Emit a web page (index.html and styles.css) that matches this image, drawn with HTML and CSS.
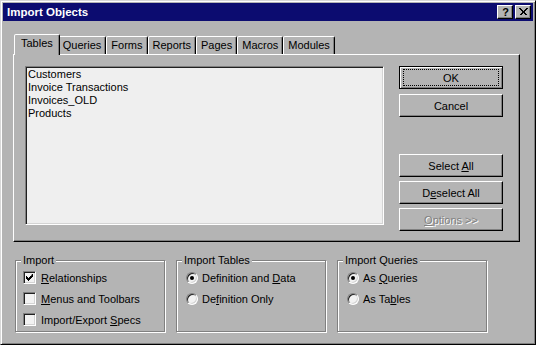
FILE: index.html
```html
<!DOCTYPE html>
<html>
<head>
<meta charset="utf-8">
<title>Import Objects</title>
<link rel="stylesheet" href="styles.css">
</head>
<body>
<div class="window">
  <div class="titlebar">
    <span class="title">Import Objects</span>
    <div class="caption-btns">
      <span class="cbtn help">?</span>
      <span class="cbtn close"><svg width="9" height="8" viewBox="0 0 9 8"><path d="M0.5 0.5 L7.5 7.5 M1.5 0.5 L8.5 7.5 M7.5 0.5 L0.5 7.5 M8.5 0.5 L1.5 7.5" stroke="#000" stroke-width="1" fill="none" shape-rendering="crispEdges"/></svg></span>
    </div>
  </div>
  <div class="content">
    <div class="tabs">
      <div class="tab active">Tables</div>
      <div class="tab">Queries</div>
      <div class="tab">Forms</div>
      <div class="tab">Reports</div>
      <div class="tab">Pages</div>
      <div class="tab">Macros</div>
      <div class="tab">Modules</div>
    </div>
    <div class="panel">
      <div class="listbox">
        <div class="item">Customers</div>
        <div class="item">Invoice Transactions</div>
        <div class="item">Invoices_OLD</div>
        <div class="item">Products</div>
      </div>
      <div class="buttons">
        <button class="btn default"><span>OK</span></button>
        <button class="btn cancel">Cancel</button>
        <button class="btn select-all">Select <u>A</u>ll</button>
        <button class="btn deselect">D<u>e</u>select All</button>
        <button class="btn options disabled"><u>O</u>ptions &gt;&gt;</button>
      </div>
    </div>
    <div class="groups">
      <fieldset class="group">
        <legend>Import</legend>
        <div class="row check-row"><span class="check checked"><svg width="7" height="7" viewBox="0 0 7 7"><path d="M6 0h1v3h-1v1h-1v1h-1v1h-1v1h-1v-1h-1v-1h-1v-3h1v1h1v1h1v-1h1v-1h1z" fill="#000"/></svg></span><span><u>R</u>elationships</span></div>
        <div class="row check-row"><span class="check"></span><span><u>M</u>enus and Toolbars</span></div>
        <div class="row check-row"><span class="check"></span><span>Import/Export <u>S</u>pecs</span></div>
      </fieldset>
      <fieldset class="group">
        <legend>Import Tables</legend>
        <div class="row radio-row"><span class="radio on"></span><span>Definition and <u>D</u>ata</span></div>
        <div class="row radio-row"><span class="radio"></span><span>De<u>f</u>inition Only</span></div>
      </fieldset>
      <fieldset class="group">
        <legend>Import Queries</legend>
        <div class="row radio-row"><span class="radio on"></span><span>As <u>Q</u>ueries</span></div>
        <div class="row radio-row"><span class="radio"></span><span>As Ta<u>b</u>les</span></div>
      </fieldset>
    </div>
  </div>
</div>
</body>
</html>
```

FILE: styles.css
```css
* { box-sizing: border-box; }
html, body { margin: 0; padding: 0; background: #b4b4b4; }
body {
  font-family: "Liberation Sans", Arial, sans-serif;
  font-size: 11px;
  color: #000;
}
.window {
  width: 536px;
  height: 345px;
  background: #b4b4b4;
  border: 1px solid;
  border-color: #d8d8d8 #000 #000 #d8d8d8;
  box-shadow: inset 1px 1px #fff, inset -1px -1px #808080;
  padding: 2px;
  display: flex;
  flex-direction: column;
}
.titlebar {
  height: 18px;
  flex: none;
  background: #0c0c70;
  display: flex;
  align-items: center;
  justify-content: space-between;
  padding: 0 2px 0 4px;
}
.title {
  color: #fff;
  font-weight: bold;
  font-size: 11.5px;
}
.caption-btns { display: flex; gap: 2px; }
.cbtn {
  width: 16px;
  height: 14px;
  background: #b4b4b4;
  border: 1px solid;
  border-color: #fff #000 #000 #fff;
  box-shadow: inset -1px -1px #808080;
  display: flex;
  align-items: center;
  justify-content: center;
}
.help {
  font-weight: bold;
  font-size: 11px;
  line-height: 12px;
  padding-left: 1px;
}
.close svg { display: block; margin-left: 1px; }
.content {
  padding: 13px 0 0 10px;
}
.tabs {
  display: flex;
  align-items: flex-end;
  height: 20px;
  padding-left: 3px;
}
.tab {
  position: relative;
  height: 18px;
  line-height: 16px;
  padding: 0 4px;
  border: 1px solid;
  border-bottom: none;
  border-color: #fff #000 transparent #fff;
  border-radius: 2px 2px 0 0;
  box-shadow: inset -1px 0 #808080;
  background: #b4b4b4;
}
.tab.active {
  z-index: 2;
  height: 21px;
  line-height: 17px;
  margin: 0 -2px -1px -2px;
  padding: 0 6px 2px 6px;
}
.tab.active + .tab { border-left-color: transparent; }
.panel {
  position: relative;
  z-index: 1;
  width: 507px;
  height: 188px;
  border: 1px solid;
  border-color: #fff #000 #000 #fff;
  box-shadow: inset -1px -1px #808080;
  padding: 11px 0 0 11px;
  display: flex;
  align-items: flex-start;
}
.listbox {
  width: 359px;
  height: 159px;
  background: #efefef;
  border: 1px solid;
  border-color: #808080 #fff #fff #808080;
  box-shadow: inset 1px 1px #202020, inset -1px -1px #d4d4d4;
  padding: 1px 2px;
}
.item { line-height: 13px; height: 13px; white-space: nowrap; }
.buttons {
  margin-left: 15px;
  display: flex;
  flex-direction: column;
}
.btn {
  position: relative;
  width: 104px;
  height: 23px;
  margin: 0;
  padding: 0;
  font-family: inherit;
  font-size: 11px;
  color: #000;
  background: #b4b4b4;
  border: 1px solid;
  border-color: #fff #000 #000 #fff;
  box-shadow: inset -1px -1px #808080;
  border-radius: 0;
}
.btn.default {
  border-color: #000;
  box-shadow: inset 1px 1px #fff, inset -1px -1px #808080;
}
.btn.default::after {
  content: "";
  position: absolute;
  top: 2px; bottom: 2px; left: 3px; right: 3px;
  border: 1px dotted #000;
}
.btn.cancel { margin-top: 5px; }
.btn.select-all { margin-top: 37px; }
.btn.deselect, .btn.options { margin-top: 4px; }
.btn.disabled {
  color: #808080;
  text-shadow: 1px 1px 0 #fff;
}
.groups {
  display: flex;
  gap: 11px;
  margin-top: 12px;
  padding-left: 2px;
}
.group {
  width: 150px;
  margin: 0;
  padding: 0 0 1px 0;
  min-width: 0;
  border: 1px solid #808080;
  box-shadow: inset 1px 1px #fff, 1px 1px #fff;
}
.group legend {
  margin-left: 5px;
  padding: 0 2px;
  line-height: 13px;
  background: #b4b4b4;
}
.row {
  height: 21px;
  display: flex;
  align-items: center;
  white-space: nowrap;
}
.check-row { padding-left: 7px; }
.radio-row { padding-left: 9px; }
.check {
  flex: none;
  width: 13px;
  height: 13px;
  margin-right: 5px;
  background: #f2f2f2;
  border: 1px solid;
  border-color: #808080 #fff #fff #808080;
  box-shadow: inset 1px 1px #202020, inset -1px -1px #d4d4d4;
  display: flex;
  align-items: center;
  justify-content: center;
}
.check svg { display: block; }
.radio {
  flex: none;
  position: relative;
  width: 12px;
  height: 12px;
  margin-right: 4px;
  border-radius: 50%;
  background: #f2f2f2;
  border: 1px solid;
  border-color: #808080 #fff #fff #808080;
  box-shadow: inset 1px 1px #202020, inset -1px -1px #d4d4d4;
}
.radio.on::after {
  content: "";
  position: absolute;
  left: 3px; top: 3px;
  width: 4px; height: 4px;
  border-radius: 50%;
  background: #000;
}
```
